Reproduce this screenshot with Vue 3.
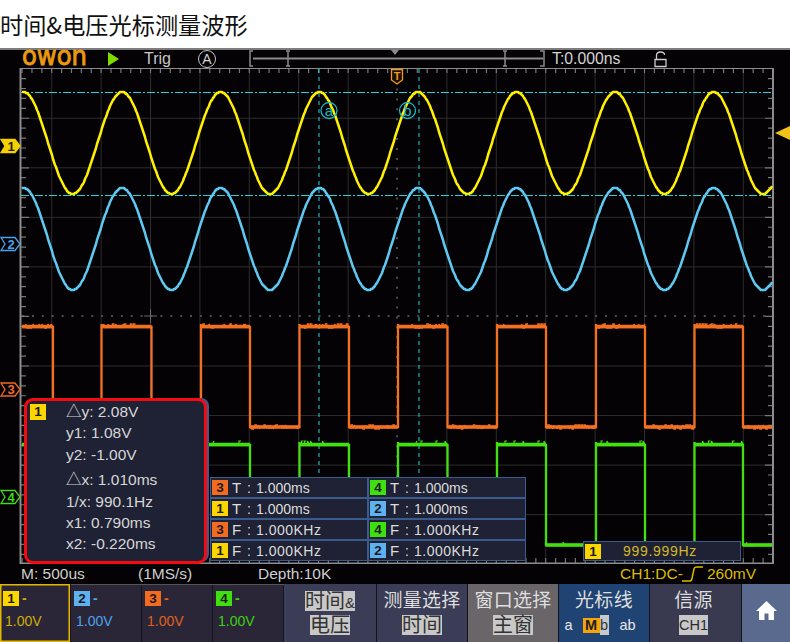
<script setup>
const L = 21, R = 773, T = 68, B = 563
let seed = 7
const rnd = () => {
  seed = (seed * 16807) % 2147483647
  return seed / 2147483647
}
const wave = (mid) => {
  let d = ''
  for (let x = L + 1; x <= R - 1; x += 1) {
    const y = Math.round(mid - 51 * Math.cos((2 * Math.PI * (x - 23.5)) / 98.6))
    d += (d ? 'L' : 'M') + x + ' ' + y
  }
  return d
}
const yellow = wave(143)
const blue = wave(239)
const edges = [53, 101.5, 151.5, 201, 250, 299.5, 349, 398, 447.5, 497, 546, 596, 645, 694.5, 743]
const all = [L + 1, ...edges, R - 1]
const square = (hi, lo) => {
  let d = `M${L + 1} ${hi}`
  edges.forEach((x, i) => {
    const fall = i % 2 === 0
    d += `L${x} ${fall ? hi : lo}L${x} ${fall ? lo : hi - 3}L${x} ${fall ? lo : hi}`
  })
  return d + `L${R - 1} ${edges.length % 2 ? lo : hi}`
}
const flats = (hi, lo) => {
  let d = ''
  for (let i = 0; i < all.length - 1; i++) {
    d += `M${all[i]} ${i % 2 === 0 ? hi : lo}H${all[i + 1]}`
  }
  return d
}
const noise = (hi, lo, amount, span) => {
  let d = ''
  for (let i = 0; i < all.length - 1; i++) {
    const y = i % 2 === 0 ? hi : lo
    for (let x = all[i] + 2; x < all[i + 1] - 1; x += 3) {
      if (rnd() < amount) d += `M${x} ${y}L${x} ${y + (rnd() < 0.7 ? -span : span)}L${x + 2} ${y + (rnd() < 0.5 ? -span : span)}`
    }
  }
  return d
}
const orange = square(327, 427)
const orangeFlat = flats(326.5, 427)
const orangeNoise = noise(326, 427, 0.7, 2)
const green = square(445, 545)
const greenFlat = flats(444.5, 545)
const greenNoise = noise(443, 544, 0.25, 2)

const hMajor = []
for (let i = 0; i < 15; i++) hMajor.push(51.7 + i * 49.4)
const vMajor = []
for (let i = 1; i < 10; i++) vMajor.push(68.7 + i * 49.55)
const topTicks = []
for (let x = 12.2 + 9.88; x < R - 1; x += 9.88) topTicks.push(x)
const sideTicks = []
for (let y = 68.7 + 9.91; y < B - 2; y += 9.91) sideTicks.push(y)
const tickPath =
  topTicks.map((x) => `M${x} ${T}V${T + 5}M${x} ${B}V${B - 5}`).join('') +
  sideTicks.map((y) => `M${L} ${y}H${L + 5}M${R} ${y}H${R - 5}`).join('') +
  vMajor.map((y) => `M${L} ${y}H${L + 8}M${R} ${y}H${R - 8}`).join('')
const dotPath =
  topTicks.map((x) => `M${x} 316h2`).join('') + sideTicks.map((y) => `M397 ${y}v2`).join('')
const gridLines =
  hMajor.filter((x) => Math.abs(x - 397) > 2).map((x) => `M${x} ${T}V${B}`).join('') +
  vMajor.filter((y) => Math.abs(y - 316) > 2).map((y) => `M${L} ${y}H${R}`).join('')

const marks = [
  { n: '1', y: 146, c: '#f5d000', fill: '#f5d000', t: '#222' },
  { n: '2', y: 244, c: '#4aa3ea', fill: 'none', t: '#4aa3ea' },
  { n: '3', y: 389.5, c: '#f26a21', fill: 'none', t: '#f26a21' },
  { n: '4', y: 497, c: '#3fdc10', fill: 'none', t: '#3fdc10' }
]
const markPoints = (y) =>
  `1,${y - 6.5} 15,${y - 6.5} 20,${y} 15,${y + 6.5} 1,${y + 6.5} 5,${y}`

const readings = [
  { k: '△y:', v: '2.08V', delta: true },
  { k: 'y1:', v: '1.08V' },
  { k: 'y2:', v: '-1.00V' },
  { k: '△x:', v: '1.010ms', delta: true, gap: true },
  { k: '1/x:', v: '990.1Hz' },
  { k: 'x1:', v: '0.790ms' },
  { k: 'x2:', v: '-0.220ms' }
]
const measures = [
  { n: '3', k: 'T', v: '1.000ms' },
  { n: '4', k: 'T', v: '1.000ms' },
  { n: '1', k: 'T', v: '1.000ms' },
  { n: '2', k: 'T', v: '1.000ms' },
  { n: '3', k: 'F', v: '1.000KHz' },
  { n: '4', k: 'F', v: '1.000KHz' },
  { n: '1', k: 'F', v: '1.000KHz' },
  { n: '2', k: 'F', v: '1.000KHz' }
]
const tabs = ['1', '2', '3', '4']
</script>

<template>
  <div class="page">
    <h1 class="title">时间&amp;电压光标测量波形</h1>
    <div class="scope">
      <div class="topbar">
        <svg class="logo" width="68" height="18" viewBox="0 0 68 18">
          <text x="1" y="15" textLength="65" lengthAdjust="spacingAndGlyphs" class="logo-text">owon</text>
        </svg>
        <svg class="play" width="11" height="14" viewBox="0 0 11 14"><polygon points="0,0 11,7 0,14" fill="#7fdc00" /></svg>
        <span class="trig">Trig</span>
        <span class="auto">A</span>
        <svg class="timeline" width="298" height="18" viewBox="250 50 298 18">
          <path d="M254 51H251V66H254M289 51V66M287 51H291M287 66H291M506 51V66M504 51H508M504 66H508M541 51H545V66H541" fill="none" stroke="#8b8b8b" stroke-width="1.500" />
          <path d="M254 58.500H544" fill="none" stroke="#8b8b8b" stroke-width="2" />
          <polygon points="392,50 400,50 396,55" fill="#8b8b8b" />
        </svg>
        <span class="offset">T:0.000ns</span>
        <svg class="lock" width="13" height="17" viewBox="0 0 13 17">
          <path d="M1 8.500H12V15.500H1ZM2.500 8V4.500C2.500 2 4 1 6.500 1S10.500 2 10.500 4" fill="none" stroke="#ccc" stroke-width="1.300" />
        </svg>
      </div>

      <div class="plot">
        <svg class="plot-svg" width="790" height="496" viewBox="0 68 790 496">
          <path :d="gridLines" stroke="#2e2e2e" stroke-width="1" fill="none" />
          <path :d="dotPath" stroke="#666" stroke-width="1.500" fill="none" />
          <path d="M144 316H157M150.500 309V323" stroke="#666" fill="none" />
          <path :d="tickPath" stroke="#777" stroke-width="1.200" fill="none" />
          <rect x="20.500" y="68" width="752.500" height="495.500" fill="none" stroke="#8c8c8c" stroke-width="2" />

          <path d="M319 69V563M419 69V563" stroke="#1fd6de" stroke-width="1" stroke-dasharray="4 4" fill="none" />
          <path d="M21 92.500H773M21 195.500H773" stroke="#1fd6de" stroke-width="1.200" stroke-dasharray="8 2 2 2" fill="none" />

          <path :d="green" stroke="#43e010" stroke-width="2.300" fill="none" />
          <path :d="greenFlat" stroke="#43e010" stroke-width="3.500" fill="none" />
          <path :d="greenNoise" stroke="#43e010" stroke-width="1.200" fill="none" />
          <path :d="orange" stroke="#f2701f" stroke-width="2.300" fill="none" />
          <path :d="orangeFlat" stroke="#f2701f" stroke-width="3.500" fill="none" />
          <path :d="orangeNoise" stroke="#f2701f" stroke-width="1.500" fill="none" />
          <path :d="blue" stroke="#5fc8f0" stroke-width="2.500" fill="none" stroke-linejoin="round" />
          <path :d="yellow" stroke="#fff000" stroke-width="2.500" fill="none" stroke-linejoin="round" />

          <circle cx="329" cy="110.500" r="8" stroke="#19b9c4" stroke-width="1.300" fill="none" />
          <text x="329" y="115.500" class="cursor-label">a</text>
          <circle cx="407.500" cy="110.500" r="8" stroke="#19b9c4" stroke-width="1.300" fill="none" />
          <text x="407.500" y="115.500" class="cursor-label">b</text>

          <polygon points="391.500,69.500 402.500,69.500 402.500,80 397,84 391.500,80" fill="#1a0f00" stroke="#f29a1a" stroke-width="1.300" />
          <text x="397" y="80" class="t-mark">T</text>

          <polygon points="775,133 790,126 790,140" fill="#f2c21a" />

          <g v-for="m in marks" :key="m.n">
            <polygon :points="markPoints(m.y)" :fill="m.fill" :stroke="m.c" stroke-width="1.300" />
            <text x="11" :y="m.y + 4.500" class="mark-num" :fill="m.t">{{ m.n }}</text>
          </g>
        </svg>

        <div class="cursors">
          <span class="badge b1 panel-badge">1</span>
          <div
            v-for="r in readings"
            :key="r.k"
            class="reading"
            :class="{ gap: r.gap }"
          >{{ r.k }}&nbsp;{{ r.v }}</div>
        </div>

        <div class="measures">
          <div v-for="(m, i) in measures" :key="i" class="cell">
            <span class="badge" :class="'b' + m.n">{{ m.n }}</span>
            <span class="cell-k">{{ m.k }}</span>
            <span class="cell-c">:</span>
            <span :class="{ wide: m.k === 'F' }">{{ m.v }}</span>
          </div>
        </div>

        <div class="freq">
          <span class="badge b1">1</span>
          <span class="freq-v">999.999Hz</span>
        </div>
      </div>

      <div class="status">
        <span class="s-m">M: 500us</span>
        <span class="s-r">(1MS/s)</span>
        <span class="s-d">Depth:10K</span>
        <span class="s-t">CH1:DC-</span>
        <svg class="edge" width="22" height="16" viewBox="0 0 22 16">
          <path d="M0 15H8C10 15 10 13 10.500 10L12 3C12.500 1 13 1 15 1H21" fill="none" stroke="#dcbc00" stroke-width="1.500" />
        </svg>
        <span class="s-v">260mV</span>
      </div>

      <div class="menu">
        <div class="tabs">
          <div v-for="(t, i) in tabs" :key="t" class="tab" :class="['t' + t, { active: i === 0 }]">
            <div class="tab-top">
              <span class="badge" :class="'b' + t">{{ t }}</span>
              <span class="tab-dash">-</span>
            </div>
            <div class="tab-v">1.00V</div>
          </div>
        </div>
        <div class="btn btn-a">
          <span class="hl hl-top">时间<small>&amp;</small></span>
          <span class="hl">电压</span>
        </div>
        <div class="btn btn-b">
          <span class="cap">测量选择</span>
          <span class="hl">时间</span>
        </div>
        <div class="btn btn-c">
          <span class="cap">窗口选择</span>
          <span class="hl">主窗</span>
        </div>
        <div class="btn btn-d">
          <span class="cap">光标线</span>
          <div class="opts">
            <span class="o-a">a</span>
            <span class="o-m">M</span>
            <span class="o-b">b</span>
            <span class="o-ab">ab</span>
          </div>
        </div>
        <div class="btn btn-e">
          <span class="cap">信源</span>
          <span class="hl hl-ch">CH1</span>
        </div>
        <div class="home">
          <svg width="21" height="19" viewBox="0 0 21 19">
            <path d="M10.500 0L21 10H18V19H12.500V12.500H8.500V19H3V10H0Z" fill="#fff" />
          </svg>
        </div>
      </div>
    </div>
  </div>
</template>

<style>
html, body { margin: 0; padding: 0; background: #fff; }
</style>

<style scoped>
.page {
  width: 790px;
  height: 642px;
  overflow: hidden;
  background: #fff;
  font-family: "Liberation Sans", "Noto Sans CJK SC", sans-serif;
}
.title {
  margin: 0;
  height: 48px;
  line-height: 48px;
  font-size: 23.200px;
  font-weight: 400;
  color: #111;
  white-space: nowrap;
  font-family: "Noto Sans CJK SC", sans-serif;
}
.scope {
  height: 594px;
  background: #040204;
  display: flex;
  flex-direction: column;
  color: #d2d2d2;
}
.topbar {
  height: 20px;
  box-sizing: border-box;
  border-top: 2px solid #7d7d7d;
  display: flex;
  align-items: center;
  font-size: 15.800px;
}
.logo { margin-left: 21px; overflow: visible; }
.logo-text {
  font-family: "DejaVu Sans", sans-serif;
  font-size: 26px;
  fill: #eb9a12;
  stroke: #eb9a12;
  stroke-width: 0.900px;
}
.play { margin-left: 19px; }
.trig { margin-left: 25px; width: 31px; font-size: 16px; color: #c8c8c8; }
.auto {
  margin-left: 23px;
  width: 16px;
  height: 16px;
  border: 1.500px solid #c8c8c8;
  border-radius: 50%;
  text-align: center;
  line-height: 16px;
  font-size: 14px;
}
.timeline { margin-left: 33px; flex: none; }
.offset { margin-left: 5px; width: 70px; white-space: nowrap; }
.lock { margin-left: 32px; }

.plot {
  position: relative;
  height: 496px;
  flex: none;
}
.plot-svg { display: block; }
.cursor-label {
  font-family: "Liberation Sans", sans-serif;
  font-size: 15px;
  fill: #19b9c4;
  text-anchor: middle;
}
.t-mark {
  font-family: "Liberation Sans", sans-serif;
  font-size: 11px;
  font-weight: 700;
  fill: #f29a1a;
  text-anchor: middle;
}
.mark-num {
  font-family: "Liberation Sans", sans-serif;
  font-size: 13px;
  font-weight: 700;
  text-anchor: middle;
}

.badge {
  display: inline-block;
  flex: none;
  width: 16px;
  height: 15px;
  line-height: 15px;
  text-align: center;
  font-size: 13.500px;
  font-weight: 700;
  color: #1a1a1a;
}
.b1 { background: #fdd600; }
.b2 { background: #5fb2f2; }
.b3 { background: #f26b21; }
.b4 { background: #3fe010; }

.cursors {
  position: absolute;
  left: 24px;
  top: 330px;
  width: 138px;
  height: 160px;
  border: 3px solid #f50a10;
  border-radius: 9px;
  background: #1f2234;
  box-shadow: 3px -1px 0 -1px #3b5b8f;
  padding: 0 0 0 39px;
  font-size: 15.500px;
  color: #d6d6d6;
}
.panel-badge {
  position: absolute;
  left: 3px;
  top: 3px;
  height: 16px;
  line-height: 16px;
}
.reading {
  height: 21.400px;
  line-height: 21.400px;
  white-space: nowrap;
}
.reading.gap { margin-top: 4px; }

.measures {
  position: absolute;
  left: 210px;
  top: 409px;
  width: 316px;
  display: grid;
  grid-template-columns: 158px 158px;
  grid-auto-rows: 21px;
}
.cell {
  box-sizing: border-box;
  border: 1px solid #3b5b8f;
  background: #1f2234;
  display: flex;
  align-items: center;
  padding-left: 1px;
  font-size: 14px;
  color: #dcdcdc;
  white-space: nowrap;
}
.cell-k { margin-left: 4px; width: 15px; font-size: 15px; }
.cell-c { width: 9px; }
.wide { letter-spacing: 0.500px; }

.freq {
  position: absolute;
  left: 583px;
  top: 473px;
  width: 158px;
  height: 20px;
  box-sizing: border-box;
  border: 1px solid #3b5b8f;
  background: #1f2234;
  display: flex;
  align-items: center;
  padding-left: 1px;
}
.freq-v { margin-left: 22px; font-size: 14px; color: #d4b82a; letter-spacing: 0.700px; }

.status {
  height: 20px;
  flex: none;
  display: flex;
  align-items: center;
  font-size: 15.500px;
  color: #cfcfcf;
  white-space: nowrap;
}
.s-m { margin-left: 21px; width: 117px; }
.s-r { width: 120px; }
.s-d { width: 362px; }
.s-t { color: #dcbc00; width: 62px; }
.edge { flex: none; }
.s-v { margin-left: 3px; color: #dcbc00; }

.menu {
  height: 58px;
  flex: none;
  display: flex;
  background: #3a4058;
}
.tabs { width: 284px; display: flex; flex: none; border-top: 1px solid #555; box-sizing: border-box; }
.tab {
  width: 71px;
  box-sizing: border-box;
  background: #2a2638;
  border-right: 1px solid #15131d;
  padding: 5px 0 0 3px;
}
.tab.active {
  box-shadow: inset 0 0 0 1.500px #e5b800;
  margin-top: -1px;
  padding-top: 6px;
}
.tab-top { display: flex; align-items: center; height: 16px; }
.tab-dash { margin-left: 3px; font-size: 14px; font-weight: 700; }
.tab-v { margin-top: 7px; margin-left: 2px; font-size: 14px; }
.t1 .tab-dash, .t1 .tab-v { color: #d0ac00; }
.t2 .tab-dash, .t2 .tab-v { color: #4aa3ea; }
.t3 .tab-dash, .t3 .tab-v { color: #e0601e; }
.t4 .tab-dash, .t4 .tab-v { color: #3fd010; }

.btn {
  flex: none;
  box-sizing: border-box;
  border-right: 1px solid #14121a;
  display: flex;
  flex-direction: column;
  align-items: center;
  padding-top: 7px;
  font-size: 19px;
  line-height: 20px;
  color: #dedede;
}
.btn-a { margin-left: 3px; width: 90px; background: #3a3d55; padding-right: 3px; }
.btn-b { width: 91px; background: #3a3d55; }
.btn-c { width: 91px; background: #6a6568; }
.btn-d { width: 91px; background: #1f4373; }
.btn-e { width: 92px; background: #393a50; padding-right: 4px; }
.cap { height: 24px; white-space: nowrap; letter-spacing: 0.300px; }
.hl {
  background: #c8c8c8;
  color: #333;
  font-size: 20px;
  height: 20px;
  white-space: nowrap;
}
.hl-top { margin-bottom: 4px; }
.hl-top small { font-size: 15px; }
.hl-ch { font-size: 14.500px; color: #2c2c2c; }
.opts {
  position: relative;
  display: flex;
  align-items: center;
  width: 91px;
  height: 20px;
  font-size: 14.500px;
  line-height: 20px;
  color: #e8e8e8;
}
.o-a { margin-left: 6px; width: 18px; }
.o-m {
  width: 17px;
  height: 15px;
  line-height: 15px;
  text-align: center;
  background: #f5a50a;
  color: #222;
  font-weight: 700;
}
.o-b { width: 9px; text-align: center; background: #c8c8c8; color: #333; }
.o-ab { margin-left: 11px; }
.home {
  flex: 1;
  background: #5a6a8e;
  display: flex;
  align-items: center;
  justify-content: center;
  padding-bottom: 5px;
}
</style>
